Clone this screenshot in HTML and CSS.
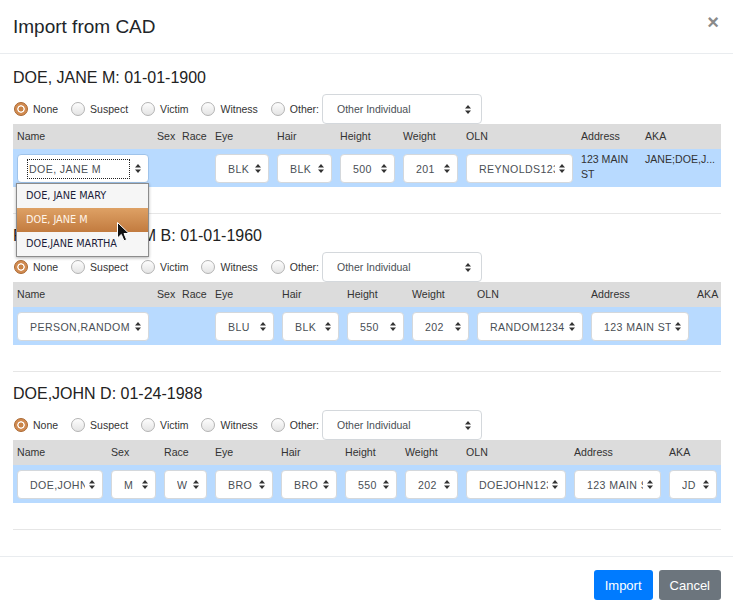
FILE: index.html
```html
<!DOCTYPE html>
<html>
<head>
<meta charset="utf-8">
<title>Import from CAD</title>
<link rel="stylesheet" href="styles.css">
</head>
<body>
<div class="modal">
  <div class="mh">
    <h4 class="mt">Import from CAD</h4>
    <span class="close">×</span>
  </div>
  <div class="mb">
    <section class="sec">
      <h5 class="st">DOE, JANE M: 01-01-1900</h5>
      <div class="roles">
        <span class="role"><span class="radio on"></span>None</span>
        <span class="role"><span class="radio"></span>Suspect</span>
        <span class="role"><span class="radio"></span>Victim</span>
        <span class="role"><span class="radio"></span>Witness</span>
        <span class="role last"><span class="radio"></span>Other:</span>
        <div class="sel other"><span class="v">Other Individual</span><svg width="6" height="9" viewBox="0 0 6 9"><path d="M0 3.5L3 0L6 3.5ZM0 5.5L3 9L6 5.5Z"/></svg></div>
      </div>
      <div class="tbl t1">
        <div class="thead"><div>Name</div><div>Sex</div><div>Race</div><div>Eye</div><div>Hair</div><div>Height</div><div>Weight</div><div>OLN</div><div>Address</div><div>AKA</div></div>
        <div class="trow">
          <div><div class="sel focus"><span class="v"><span class="ring">DOE, JANE M</span></span><svg width="6" height="9" viewBox="0 0 6 9"><path d="M0 3.5L3 0L6 3.5ZM0 5.5L3 9L6 5.5Z"/></svg>
            <div class="dd">
              <div class="opt">DOE, JANE MARY</div>
              <div class="opt cur">DOE, JANE M</div>
              <div class="opt">DOE,JANE MARTHA</div>
              <svg class="cursor" width="13" height="20" viewBox="0 0 13 20"><path d="M0.5 0.5L0.5 16L4.3 12.4L7 18.8L9.6 17.7L7 11.5L12 11.5Z" fill="#111" stroke="#fff" stroke-width="1"/></svg>
            </div>
          </div></div>
          <div></div><div></div>
          <div><div class="sel"><span class="v">BLK</span><svg width="6" height="9" viewBox="0 0 6 9"><path d="M0 3.5L3 0L6 3.5ZM0 5.5L3 9L6 5.5Z"/></svg></div></div>
          <div><div class="sel"><span class="v">BLK</span><svg width="6" height="9" viewBox="0 0 6 9"><path d="M0 3.5L3 0L6 3.5ZM0 5.5L3 9L6 5.5Z"/></svg></div></div>
          <div><div class="sel"><span class="v">500</span><svg width="6" height="9" viewBox="0 0 6 9"><path d="M0 3.5L3 0L6 3.5ZM0 5.5L3 9L6 5.5Z"/></svg></div></div>
          <div><div class="sel"><span class="v">201</span><svg width="6" height="9" viewBox="0 0 6 9"><path d="M0 3.5L3 0L6 3.5ZM0 5.5L3 9L6 5.5Z"/></svg></div></div>
          <div><div class="sel"><span class="v">REYNOLDS123</span><svg width="6" height="9" viewBox="0 0 6 9"><path d="M0 3.5L3 0L6 3.5ZM0 5.5L3 9L6 5.5Z"/></svg></div></div>
          <div class="txt">123 MAIN ST</div>
          <div class="txt nowrap">JANE;DOE,J...</div>
        </div>
      </div>
    </section>

    <section class="sec">
      <h5 class="st">PERSON,RANDOM B: 01-01-1960</h5>
      <div class="roles">
        <span class="role"><span class="radio on"></span>None</span>
        <span class="role"><span class="radio"></span>Suspect</span>
        <span class="role"><span class="radio"></span>Victim</span>
        <span class="role"><span class="radio"></span>Witness</span>
        <span class="role last"><span class="radio"></span>Other:</span>
        <div class="sel other"><span class="v">Other Individual</span><svg width="6" height="9" viewBox="0 0 6 9"><path d="M0 3.5L3 0L6 3.5ZM0 5.5L3 9L6 5.5Z"/></svg></div>
      </div>
      <div class="tbl t2">
        <div class="thead"><div>Name</div><div>Sex</div><div>Race</div><div>Eye</div><div>Hair</div><div>Height</div><div>Weight</div><div>OLN</div><div>Address</div><div>AKA</div></div>
        <div class="trow">
          <div><div class="sel"><span class="v">PERSON,RANDOM B</span><svg width="6" height="9" viewBox="0 0 6 9"><path d="M0 3.5L3 0L6 3.5ZM0 5.5L3 9L6 5.5Z"/></svg></div></div>
          <div></div><div></div>
          <div><div class="sel"><span class="v">BLU</span><svg width="6" height="9" viewBox="0 0 6 9"><path d="M0 3.5L3 0L6 3.5ZM0 5.5L3 9L6 5.5Z"/></svg></div></div>
          <div><div class="sel"><span class="v">BLK</span><svg width="6" height="9" viewBox="0 0 6 9"><path d="M0 3.5L3 0L6 3.5ZM0 5.5L3 9L6 5.5Z"/></svg></div></div>
          <div><div class="sel"><span class="v">550</span><svg width="6" height="9" viewBox="0 0 6 9"><path d="M0 3.5L3 0L6 3.5ZM0 5.5L3 9L6 5.5Z"/></svg></div></div>
          <div><div class="sel"><span class="v">202</span><svg width="6" height="9" viewBox="0 0 6 9"><path d="M0 3.5L3 0L6 3.5ZM0 5.5L3 9L6 5.5Z"/></svg></div></div>
          <div><div class="sel"><span class="v">RANDOM12345</span><svg width="6" height="9" viewBox="0 0 6 9"><path d="M0 3.5L3 0L6 3.5ZM0 5.5L3 9L6 5.5Z"/></svg></div></div>
          <div><div class="sel"><span class="v">123 MAIN ST</span><svg width="6" height="9" viewBox="0 0 6 9"><path d="M0 3.5L3 0L6 3.5ZM0 5.5L3 9L6 5.5Z"/></svg></div></div>
          <div></div>
        </div>
      </div>
    </section>

    <section class="sec">
      <h5 class="st">DOE,JOHN D: 01-24-1988</h5>
      <div class="roles">
        <span class="role"><span class="radio on"></span>None</span>
        <span class="role"><span class="radio"></span>Suspect</span>
        <span class="role"><span class="radio"></span>Victim</span>
        <span class="role"><span class="radio"></span>Witness</span>
        <span class="role last"><span class="radio"></span>Other:</span>
        <div class="sel other"><span class="v">Other Individual</span><svg width="6" height="9" viewBox="0 0 6 9"><path d="M0 3.5L3 0L6 3.5ZM0 5.5L3 9L6 5.5Z"/></svg></div>
      </div>
      <div class="tbl t3">
        <div class="thead"><div>Name</div><div>Sex</div><div>Race</div><div>Eye</div><div>Hair</div><div>Height</div><div>Weight</div><div>OLN</div><div>Address</div><div>AKA</div></div>
        <div class="trow">
          <div><div class="sel"><span class="v">DOE,JOHN D</span><svg width="6" height="9" viewBox="0 0 6 9"><path d="M0 3.5L3 0L6 3.5ZM0 5.5L3 9L6 5.5Z"/></svg></div></div>
          <div><div class="sel"><span class="v">M</span><svg width="6" height="9" viewBox="0 0 6 9"><path d="M0 3.5L3 0L6 3.5ZM0 5.5L3 9L6 5.5Z"/></svg></div></div>
          <div><div class="sel"><span class="v">W</span><svg width="6" height="9" viewBox="0 0 6 9"><path d="M0 3.5L3 0L6 3.5ZM0 5.5L3 9L6 5.5Z"/></svg></div></div>
          <div><div class="sel"><span class="v">BRO</span><svg width="6" height="9" viewBox="0 0 6 9"><path d="M0 3.5L3 0L6 3.5ZM0 5.5L3 9L6 5.5Z"/></svg></div></div>
          <div><div class="sel"><span class="v">BRO</span><svg width="6" height="9" viewBox="0 0 6 9"><path d="M0 3.5L3 0L6 3.5ZM0 5.5L3 9L6 5.5Z"/></svg></div></div>
          <div><div class="sel"><span class="v">550</span><svg width="6" height="9" viewBox="0 0 6 9"><path d="M0 3.5L3 0L6 3.5ZM0 5.5L3 9L6 5.5Z"/></svg></div></div>
          <div><div class="sel"><span class="v">202</span><svg width="6" height="9" viewBox="0 0 6 9"><path d="M0 3.5L3 0L6 3.5ZM0 5.5L3 9L6 5.5Z"/></svg></div></div>
          <div><div class="sel"><span class="v">DOEJOHN123</span><svg width="6" height="9" viewBox="0 0 6 9"><path d="M0 3.5L3 0L6 3.5ZM0 5.5L3 9L6 5.5Z"/></svg></div></div>
          <div><div class="sel"><span class="v">123 MAIN ST</span><svg width="6" height="9" viewBox="0 0 6 9"><path d="M0 3.5L3 0L6 3.5ZM0 5.5L3 9L6 5.5Z"/></svg></div></div>
          <div><div class="sel"><span class="v">JD</span><svg width="6" height="9" viewBox="0 0 6 9"><path d="M0 3.5L3 0L6 3.5ZM0 5.5L3 9L6 5.5Z"/></svg></div></div>
        </div>
      </div>
    </section>
  </div>
  <div class="mf">
    <button class="btn primary">Import</button>
    <button class="btn secondary">Cancel</button>
  </div>
</div>
</body>
</html>
```

FILE: styles.css
```css
html, body {
  margin: 0;
  padding: 0;
}
body {
  width: 733px;
  height: 613px;
  overflow: hidden;
  background: #fff;
  font-family: "Liberation Sans", Arial, sans-serif;
  color: #212529;
}
.modal {
  width: 733px;
}
.mh {
  height: 54px;
  box-sizing: border-box;
  border-bottom: 1px solid #e9ecef;
  display: flex;
  align-items: center;
  justify-content: space-between;
  padding: 0 13px;
}
.mt {
  margin: 0;
  font-size: 19px;
  font-weight: 400;
  color: #212529;
}
.close {
  font-size: 20px;
  font-weight: 700;
  line-height: 1;
  color: #8a8a8a;
  margin-top: -9px;
  margin-right: 1px;
  margin-left: auto;
}
.mb {
  padding: 14px 12px 26px 13px;
}
.sec {
  padding-bottom: 26px;
  border-bottom: 1px solid #e6e6e6;
  position: relative;
}
.sec + .sec {
  margin-top: 12px;
}
.st {
  margin: 0 0 6px;
  font-size: 16px;
  line-height: 20px;
  font-weight: 400;
  color: #222;
}
.roles {
  display: flex;
  align-items: center;
  height: 30px;
  font-size: 10.5px;
  color: #333;
}
.role {
  display: flex;
  align-items: center;
  margin-right: 12px;
}
.role.last {
  margin-right: 3px;
}
.radio {
  width: 14px;
  height: 14px;
  box-sizing: border-box;
  border-radius: 50%;
  border: 1px solid #b3b3b3;
  background: linear-gradient(#fdfdfd, #e4e4e4);
  margin: 0 5px 0 1px;
}
.radio.on {
  border: 1px solid #a8652e;
  background: radial-gradient(circle, #c98346 0 2.2px, #fff 2.8px 3.4px, #d28c52 4px);
}
.sel {
  position: relative;
  display: flex;
  align-items: center;
  height: 29px;
  box-sizing: border-box;
  border: 1px solid #d4d8dc;
  border-radius: 4px;
  background: #fff;
  padding: 0 7px 0 12px;
  font-size: 10.6px;
  color: #4a4f55;
}
.sel .v {
  flex: 1;
  min-width: 0;
  overflow: hidden;
  white-space: nowrap;
}
.trow .sel .v {
  letter-spacing: 0.4px;
}
.sel svg {
  flex: none;
  margin-left: 4px;
  fill: #333;
}
.sel.other {
  width: 160px;
  height: 30px;
  padding-left: 14px;
  padding-right: 10px;
  font-size: 10.5px;
}
.sel.focus {
  border-color: #9fc3ea;
  padding-left: 9px;
}
.ring {
  display: inline-block;
  outline: 1px dotted #222;
  outline-offset: 0;
  line-height: 18px;
  padding: 0 28px 0 1px;
  margin: 1px;
}
.t1 {
  --cols: 140px 25px 33px 62px 63px 63px 63px 115px 64px 80px;
}
.t2 {
  --cols: 140px 25px 33px 67px 65px 65px 65px 114px 106px 28px;
}
.t3 {
  --cols: 94px 53px 51px 66px 64px 60px 61px 108px 95px 56px;
}
.thead,
.trow {
  display: grid;
  grid-template-columns: var(--cols);
}
.thead {
  background: #dcdcdc;
  height: 25px;
  line-height: 25px;
  font-size: 10.6px;
  color: #333;
}
.thead > div {
  padding: 0 4px;
  white-space: nowrap;
}
.trow {
  background: #b8daff;
  height: 38px;
}
.trow > div {
  padding: 5px 4px 0;
  min-width: 0;
}
.trow > .txt {
  padding-top: 3px;
  font-size: 10.6px;
  line-height: 15px;
  color: #333;
}
.trow > .nowrap {
  white-space: nowrap;
  overflow: hidden;
}
.dd {
  position: absolute;
  left: -2px;
  top: 28px;
  width: 133px;
  box-sizing: border-box;
  background: #f6f6f6;
  border: 1px solid #8c8c8c;
  box-shadow: 0 1px 3px rgba(0, 0, 0, 0.3);
  font-family: "DejaVu Sans Condensed", "DejaVu Sans", sans-serif;
  font-size: 10.8px;
  color: #1d1d3a;
  z-index: 5;
  letter-spacing: 0;
}
.opt {
  height: 24px;
  line-height: 24px;
  padding-left: 9px;
  white-space: nowrap;
}
.opt.cur {
  background: linear-gradient(#dea165, #c27b3f);
  color: #fff4e8;
}
.sel .dd .cursor {
  position: absolute;
  left: 100px;
  top: 38px;
  margin: 0;
  fill: none;
}
.mf {
  border-top: 1px solid #e9ecef;
  display: flex;
  justify-content: flex-end;
  gap: 6px;
  padding: 13px 12px;
}
.btn {
  height: 30px;
  padding: 0 11px;
  font-family: "Liberation Sans", Arial, sans-serif;
  font-size: 13px;
  border: none;
  border-radius: 3px;
  color: #fff;
}
.btn.primary {
  background: #007bff;
}
.btn.secondary {
  background: #6c757d;
}
```
